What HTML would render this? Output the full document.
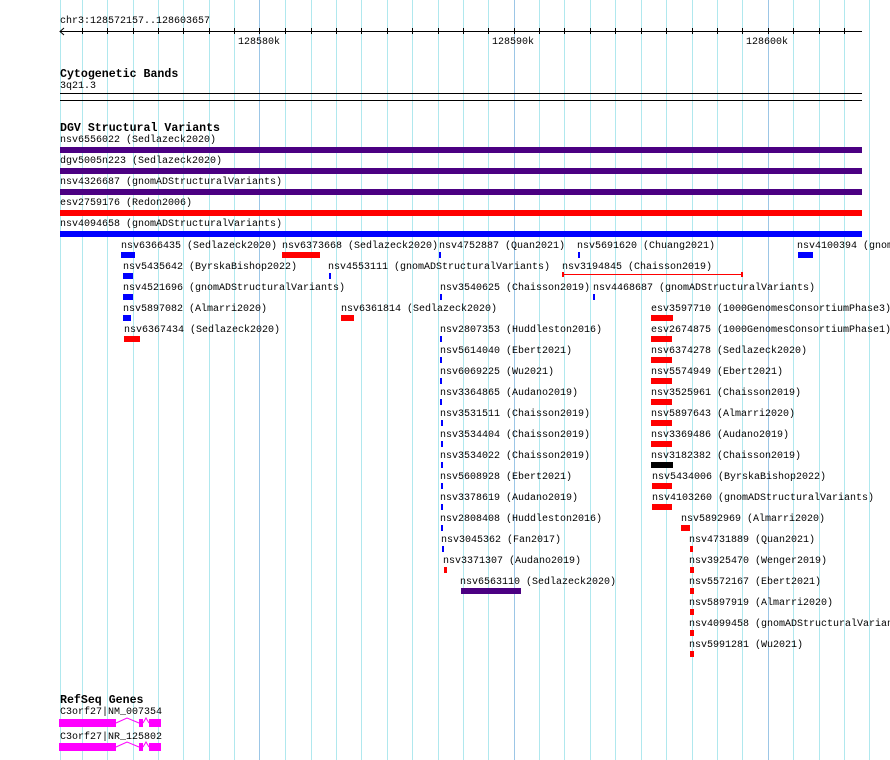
<!DOCTYPE html>
<html><head><meta charset="utf-8"><style>
html,body{margin:0;width:890px;height:760px;overflow:hidden}
body{background:#fff;position:relative;font-family:"Liberation Mono",monospace;font-size:10px;color:#000}
#w{position:absolute;left:0;top:0;width:890px;height:760px;overflow:hidden}
#w div{position:absolute}
.g{top:0;height:760px;width:1px;background:#b0e8ee}
.gd{background:#9cc6e6}
.t{line-height:10px;white-space:pre;margin-top:1px}
.b{font-weight:bold;font-size:11.6px;line-height:12px;margin-top:2px}
.bar{height:6px}
.P{background:#4b0082}.R{background:#f00}.B{background:#00f}.K{background:#000}.M{background:#f0f}
.tk{top:28px;width:1px;height:6px;background:#000}
</style></head><body><div id="w">
<div class="g" style="left:60px"></div>
<div class="g" style="left:82px"></div><div class="g" style="left:107px"></div><div class="g" style="left:133px"></div><div class="g" style="left:158px"></div><div class="g" style="left:183px"></div><div class="g" style="left:209px"></div><div class="g" style="left:234px"></div><div class="g gd" style="left:259px"></div><div class="g" style="left:285px"></div><div class="g" style="left:311px"></div><div class="g" style="left:336px"></div><div class="g" style="left:361px"></div><div class="g" style="left:387px"></div><div class="g" style="left:412px"></div><div class="g" style="left:438px"></div><div class="g" style="left:463px"></div><div class="g" style="left:488px"></div><div class="g gd" style="left:514px"></div><div class="g" style="left:539px"></div><div class="g" style="left:564px"></div><div class="g" style="left:590px"></div><div class="g" style="left:615px"></div><div class="g" style="left:641px"></div><div class="g" style="left:666px"></div><div class="g" style="left:692px"></div><div class="g" style="left:717px"></div><div class="g" style="left:742px"></div><div class="g gd" style="left:768px"></div><div class="g" style="left:793px"></div><div class="g" style="left:819px"></div><div class="g" style="left:844px"></div><div class="g" style="left:869px"></div>

<div class="t" style="left:60px;top:16px">chr3:128572157..128603657</div>
<div style="left:60px;top:31px;width:802px;height:1px;background:#000"></div>
<svg style="position:absolute;left:59px;top:27px" width="8" height="9"><path d="M5 1 L1 4.5 L5 8" stroke="#000" fill="none"/></svg>
<div class="tk" style="left:82px"></div><div class="tk" style="left:107px"></div><div class="tk" style="left:133px"></div><div class="tk" style="left:158px"></div><div class="tk" style="left:183px"></div><div class="tk" style="left:209px"></div><div class="tk" style="left:234px"></div><div class="tk" style="left:259px"></div><div class="tk" style="left:285px"></div><div class="tk" style="left:311px"></div><div class="tk" style="left:336px"></div><div class="tk" style="left:361px"></div><div class="tk" style="left:387px"></div><div class="tk" style="left:412px"></div><div class="tk" style="left:438px"></div><div class="tk" style="left:463px"></div><div class="tk" style="left:488px"></div><div class="tk" style="left:514px"></div><div class="tk" style="left:539px"></div><div class="tk" style="left:564px"></div><div class="tk" style="left:590px"></div><div class="tk" style="left:615px"></div><div class="tk" style="left:641px"></div><div class="tk" style="left:666px"></div><div class="tk" style="left:692px"></div><div class="tk" style="left:717px"></div><div class="tk" style="left:742px"></div><div class="tk" style="left:768px"></div><div class="tk" style="left:793px"></div><div class="tk" style="left:819px"></div><div class="tk" style="left:844px"></div>
<div class="t" style="left:238px;top:37px">128580k</div>
<div class="t" style="left:492px;top:37px">128590k</div>
<div class="t" style="left:746px;top:37px">128600k</div>

<div class="t b" style="left:60px;top:67px">Cytogenetic Bands</div>
<div class="t" style="left:60px;top:81px">3q21.3</div>
<div style="left:60px;top:93px;width:802px;height:1px;background:#000"></div>
<div style="left:60px;top:100px;width:802px;height:1px;background:#000"></div>

<div class="t b" style="left:60px;top:121px">DGV Structural Variants</div>
<div class="t" style="left:60px;top:135px">nsv6556022 (Sedlazeck2020)</div><div class="bar P" style="left:60px;top:147px;width:802px"></div>
<div class="t" style="left:60px;top:156px">dgv5005n223 (Sedlazeck2020)</div><div class="bar P" style="left:60px;top:168px;width:802px"></div>
<div class="t" style="left:60px;top:177px">nsv4326687 (gnomADStructuralVariants)</div><div class="bar P" style="left:60px;top:189px;width:802px"></div>
<div class="t" style="left:60px;top:198px">esv2759176 (Redon2006)</div><div class="bar R" style="left:60px;top:210px;width:802px"></div>
<div class="t" style="left:60px;top:219px">nsv4094658 (gnomADStructuralVariants)</div><div class="bar B" style="left:60px;top:231px;width:802px"></div>

<div class="t" style="left:121px;top:241px">nsv6366435 (Sedlazeck2020)</div><div class="bar B" style="left:121px;top:252px;width:14px"></div>
<div class="t" style="left:282px;top:241px">nsv6373668 (Sedlazeck2020)</div><div class="bar R" style="left:282px;top:252px;width:38px"></div>
<div class="t" style="left:439px;top:241px">nsv4752887 (Quan2021)</div><div class="bar B" style="left:439px;top:252px;width:2px"></div>
<div class="t" style="left:577px;top:241px">nsv5691620 (Chuang2021)</div><div class="bar B" style="left:578px;top:252px;width:2px"></div>
<div class="t" style="left:797px;top:241px">nsv4100394 (gnom</div><div class="bar B" style="left:798px;top:252px;width:15px"></div>

<div class="t" style="left:123px;top:262px">nsv5435642 (ByrskaBishop2022)</div><div class="bar B" style="left:123px;top:273px;width:10px"></div>
<div class="t" style="left:328px;top:262px">nsv4553111 (gnomADStructuralVariants)</div><div class="bar B" style="left:329px;top:273px;width:2px"></div>
<div class="t" style="left:562px;top:262px">nsv3194845 (Chaisson2019)</div>
<div style="left:562px;top:274px;width:180px;height:1px;background:#f00"></div>
<div style="left:562px;top:272px;width:2px;height:5px;background:#f00"></div><div style="left:741px;top:272px;width:2px;height:5px;background:#f00"></div>

<div class="t" style="left:123px;top:283px">nsv4521696 (gnomADStructuralVariants)</div><div class="bar B" style="left:123px;top:294px;width:10px"></div>
<div class="t" style="left:440px;top:283px">nsv3540625 (Chaisson2019)</div><div class="bar B" style="left:440px;top:294px;width:2px"></div>
<div class="t" style="left:593px;top:283px">nsv4468687 (gnomADStructuralVariants)</div><div class="bar B" style="left:593px;top:294px;width:2px"></div>

<div class="t" style="left:123px;top:304px">nsv5897082 (Almarri2020)</div><div class="bar B" style="left:123px;top:315px;width:8px"></div>
<div class="t" style="left:341px;top:304px">nsv6361814 (Sedlazeck2020)</div><div class="bar R" style="left:341px;top:315px;width:13px"></div>
<div class="t" style="left:651px;top:304px">esv3597710 (1000GenomesConsortiumPhase3)</div><div class="bar R" style="left:651px;top:315px;width:22px"></div>

<div class="t" style="left:124px;top:325px">nsv6367434 (Sedlazeck2020)</div><div class="bar R" style="left:124px;top:336px;width:16px"></div>
<div class="t" style="left:440px;top:325px">nsv2807353 (Huddleston2016)</div><div class="bar B" style="left:440px;top:336px;width:2px"></div>
<div class="t" style="left:651px;top:325px">esv2674875 (1000GenomesConsortiumPhase1)</div><div class="bar R" style="left:651px;top:336px;width:21px"></div>

<div class="t" style="left:440px;top:346px">nsv5614040 (Ebert2021)</div><div class="bar B" style="left:440px;top:357px;width:2px"></div>
<div class="t" style="left:440px;top:367px">nsv6069225 (Wu2021)</div><div class="bar B" style="left:440px;top:378px;width:2px"></div>
<div class="t" style="left:440px;top:388px">nsv3364865 (Audano2019)</div><div class="bar B" style="left:440px;top:399px;width:2px"></div>
<div class="t" style="left:440px;top:409px">nsv3531511 (Chaisson2019)</div><div class="bar B" style="left:441px;top:420px;width:2px"></div>
<div class="t" style="left:440px;top:430px">nsv3534404 (Chaisson2019)</div><div class="bar B" style="left:441px;top:441px;width:2px"></div>
<div class="t" style="left:440px;top:451px">nsv3534022 (Chaisson2019)</div><div class="bar B" style="left:441px;top:462px;width:2px"></div>
<div class="t" style="left:440px;top:472px">nsv5608928 (Ebert2021)</div><div class="bar B" style="left:441px;top:483px;width:2px"></div>
<div class="t" style="left:440px;top:493px">nsv3378619 (Audano2019)</div><div class="bar B" style="left:441px;top:504px;width:2px"></div>
<div class="t" style="left:440px;top:514px">nsv2808408 (Huddleston2016)</div><div class="bar B" style="left:441px;top:525px;width:2px"></div>
<div class="t" style="left:441px;top:535px">nsv3045362 (Fan2017)</div><div class="bar B" style="left:442px;top:546px;width:2px"></div>
<div class="t" style="left:443px;top:556px">nsv3371307 (Audano2019)</div><div class="bar R" style="left:444px;top:567px;width:3px"></div>
<div class="t" style="left:460px;top:577px">nsv6563110 (Sedlazeck2020)</div><div class="bar P" style="left:461px;top:588px;width:60px"></div>

<div class="t" style="left:651px;top:346px">nsv6374278 (Sedlazeck2020)</div><div class="bar R" style="left:651px;top:357px;width:21px"></div>
<div class="t" style="left:651px;top:367px">nsv5574949 (Ebert2021)</div><div class="bar R" style="left:651px;top:378px;width:21px"></div>
<div class="t" style="left:651px;top:388px">nsv3525961 (Chaisson2019)</div><div class="bar R" style="left:651px;top:399px;width:21px"></div>
<div class="t" style="left:651px;top:409px">nsv5897643 (Almarri2020)</div><div class="bar R" style="left:651px;top:420px;width:21px"></div>
<div class="t" style="left:651px;top:430px">nsv3369486 (Audano2019)</div><div class="bar R" style="left:651px;top:441px;width:21px"></div>
<div class="t" style="left:651px;top:451px">nsv3182382 (Chaisson2019)</div><div class="bar K" style="left:651px;top:462px;width:22px"></div>
<div class="t" style="left:652px;top:472px">nsv5434006 (ByrskaBishop2022)</div><div class="bar R" style="left:652px;top:483px;width:20px"></div>
<div class="t" style="left:652px;top:493px">nsv4103260 (gnomADStructuralVariants)</div><div class="bar R" style="left:652px;top:504px;width:20px"></div>
<div class="t" style="left:681px;top:514px">nsv5892969 (Almarri2020)</div><div class="bar R" style="left:681px;top:525px;width:9px"></div>
<div class="t" style="left:689px;top:535px">nsv4731889 (Quan2021)</div><div class="bar R" style="left:690px;top:546px;width:3px"></div>
<div class="t" style="left:689px;top:556px">nsv3925470 (Wenger2019)</div><div class="bar R" style="left:690px;top:567px;width:4px"></div>
<div class="t" style="left:689px;top:577px">nsv5572167 (Ebert2021)</div><div class="bar R" style="left:690px;top:588px;width:4px"></div>
<div class="t" style="left:689px;top:598px">nsv5897919 (Almarri2020)</div><div class="bar R" style="left:690px;top:609px;width:4px"></div>
<div class="t" style="left:689px;top:619px">nsv4099458 (gnomADStructuralVarian</div><div class="bar R" style="left:690px;top:630px;width:4px"></div>
<div class="t" style="left:689px;top:640px">nsv5991281 (Wu2021)</div><div class="bar R" style="left:690px;top:651px;width:4px"></div>

<div class="t b" style="left:60px;top:693px">RefSeq Genes</div>
<div class="t" style="left:60px;top:707px">C3orf27|NM_007354</div>
<div class="t" style="left:60px;top:732px">C3orf27|NR_125802</div>
<svg style="position:absolute;left:0;top:0" width="890" height="760">
<g fill="#f0f"><rect x="59" y="719" width="57" height="8"/><rect x="139" y="719" width="4" height="8"/><rect x="149" y="719" width="12" height="8"/>
<rect x="59" y="743" width="57" height="8"/><rect x="139" y="743" width="4" height="8"/><rect x="149" y="743" width="12" height="8"/></g>
<g stroke="#f0f" fill="none" stroke-width="1"><path d="M116 723 L127 718 L139 723 M143 723 L146 718 L149 723"/><path d="M116 747 L127 742 L139 747 M143 747 L146 742 L149 747"/></g>
</svg>
</div></body></html>
